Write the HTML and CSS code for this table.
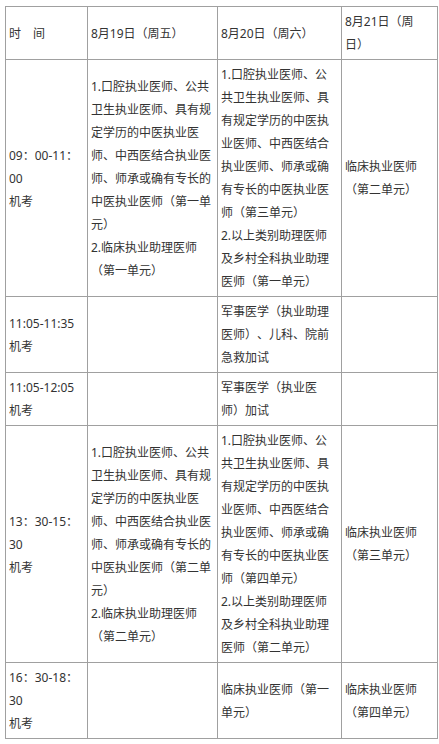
FILE: index.html
```html
<!DOCTYPE html>
<html lang="zh-CN">
<head>
<meta charset="utf-8">
<title>考试时间安排</title>
<link rel="stylesheet" href="styles.css">
</head>
<body>
<div class="page">
<table class="schedule">
  <colgroup>
    <col class="c1">
    <col class="c2">
    <col class="c3">
    <col class="c4">
  </colgroup>
  <tr class="head">
    <td>时　间</td>
    <td>8月19日（周五）</td>
    <td>8月20日（周六）</td>
    <td>8月21日（周日）</td>
  </tr>
  <tr>
    <td>09：00-11：00<br>机考</td>
    <td>1.口腔执业医师、公共卫生执业医师、具有规定学历的中医执业医师、中西医结合执业医师、师承或确有专长的中医执业医师（第一单元）<br>2.临床执业助理医师（第一单元）</td>
    <td>1.口腔执业医师、公共卫生执业医师、具有规定学历的中医执业医师、中西医结合执业医师、师承或确有专长的中医执业医师（第三单元）<br>2.以上类别助理医师及乡村全科执业助理医师（第一单元）</td>
    <td>临床执业医师（第二单元）</td>
  </tr>
  <tr>
    <td>11:05-11:35<br>机考</td>
    <td></td>
    <td>军事医学（执业助理医师）、儿科、院前急救加试</td>
    <td></td>
  </tr>
  <tr>
    <td>11:05-12:05<br>机考</td>
    <td></td>
    <td>军事医学（执业医师）加试</td>
    <td></td>
  </tr>
  <tr>
    <td>13：30-15：30<br>机考</td>
    <td>1.口腔执业医师、公共卫生执业医师、具有规定学历的中医执业医师、中西医结合执业医师、师承或确有专长的中医执业医师（第二单元）<br>2.临床执业助理医师（第二单元）</td>
    <td>1.口腔执业医师、公共卫生执业医师、具有规定学历的中医执业医师、中西医结合执业医师、师承或确有专长的中医执业医师（第四单元）<br>2.以上类别助理医师及乡村全科执业助理医师（第二单元）</td>
    <td>临床执业医师（第三单元）</td>
  </tr>
  <tr>
    <td>16：30-18：30<br>机考</td>
    <td></td>
    <td>临床执业医师（第一单元）</td>
    <td>临床执业医师（第四单元）</td>
  </tr>
</table>
</div>
</body>
</html>
```
FILE: styles.css
```css
html, body {
  margin: 0;
  padding: 0;
  background: #ffffff;
}

.page {
  padding: 6px 0 0 5px;
}

.schedule {
  border-collapse: collapse;
  table-layout: fixed;
  width: 432px;
  font-family: "Noto Sans", "Noto Sans CJK SC", sans-serif;
  font-size: 12px;
  line-height: 23px;
  color: #333333;
  text-spacing-trim: space-all;
}

.c1 { width: 82px; }
.c2 { width: 130px; }
.c3 { width: 124px; }
.c4 { width: 96px; }

.schedule td {
  border: 1px solid #a0a0a0;
  padding: 3px 3px;
  vertical-align: middle;
  text-align: left;
  word-break: normal;
  line-break: strict;
  text-spacing-trim: space-all;
}
```
